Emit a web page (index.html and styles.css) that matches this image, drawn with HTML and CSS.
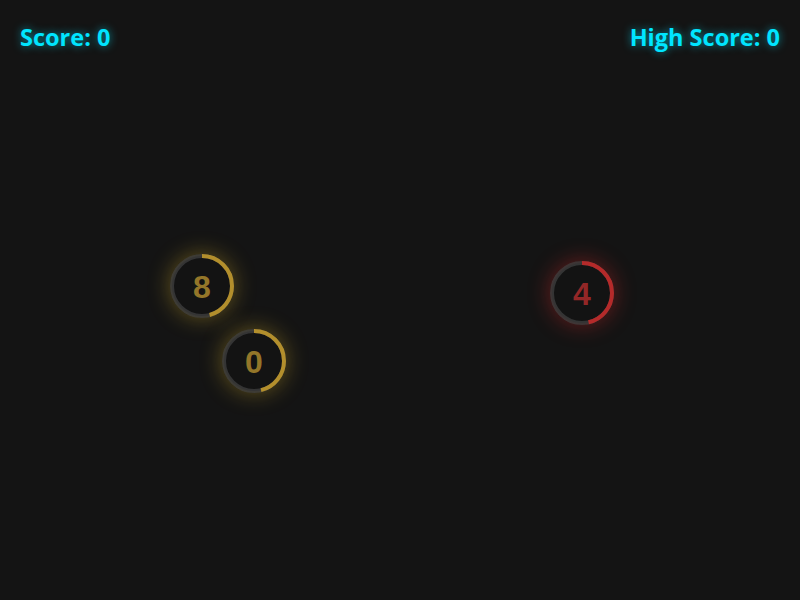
FILE: index.html
```html
<!DOCTYPE html>
<html>
<head>
<meta charset="utf-8">
<link rel="stylesheet" href="styles.css">
</head>
<body>
<div class="game">
  <div class="hud">
    <div class="score">Score: 0</div>
    <div class="score">High Score: 0</div>
  </div>
  <div class="target gold" style="left:170px;top:254px">
    <svg viewBox="0 0 64 64" width="64" height="64">
      <circle class="track" cx="32" cy="32" r="30"/>
      <circle class="arc" cx="32" cy="32" r="30" stroke-dasharray="86.4 188.5" transform="rotate(-90 32 32)"/>
    </svg>
    <span class="num">8</span>
  </div>
  <div class="target gold" style="left:222px;top:329px">
    <svg viewBox="0 0 64 64" width="64" height="64">
      <circle class="track" cx="32" cy="32" r="30"/>
      <circle class="arc" cx="32" cy="32" r="30" stroke-dasharray="87 188.5" transform="rotate(-90 32 32)"/>
    </svg>
    <span class="num">0</span>
  </div>
  <div class="target red" style="left:550px;top:261px">
    <svg viewBox="0 0 64 64" width="64" height="64">
      <circle class="track" cx="32" cy="32" r="30"/>
      <circle class="arc" cx="32" cy="32" r="30" stroke-dasharray="87.5 188.5" transform="rotate(-90 32 32)"/>
    </svg>
    <span class="num">4</span>
  </div>
</div>
</body>
</html>
```
FILE: styles.css
```css
html, body {
  margin: 0;
  padding: 0;
  background: #141414;
  width: 800px;
  height: 600px;
  overflow: hidden;
}
.game {
  position: relative;
  width: 800px;
  height: 600px;
}
.hud {
  display: flex;
  justify-content: space-between;
  padding: 21px 20px 0 20px;
}
.score {
  font-family: "Open Sans", "Noto Sans", sans-serif;
  font-weight: 700;
  font-size: 23.5px;
  line-height: 32px;
  color: #00e5ff;
  text-shadow: 0 0 8px rgba(0, 229, 255, 0.6);
}
.target {
  position: absolute;
  width: 64px;
  height: 64px;
  border-radius: 50%;
  display: flex;
  align-items: center;
  justify-content: center;
  background: #141414;
}
.target svg {
  position: absolute;
  left: 0;
  top: 0;
}
.track {
  fill: #131313;
  stroke: rgba(85, 85, 85, 0.5);
  stroke-width: 4;
}
.arc {
  fill: none;
  stroke-width: 4;
}
.gold {
  box-shadow: 0 0 22px rgba(200, 165, 40, 0.45), inset 0 0 10px rgba(200, 165, 40, 0.22);
}
.gold .arc { stroke: #b38f2c; }
.gold .num { color: #947629; }
.red {
  box-shadow: 0 0 22px rgba(210, 40, 40, 0.45), inset 0 0 10px rgba(210, 40, 40, 0.22);
}
.red .arc { stroke: #b52a2a; }
.red .num { color: #932727; }
.num {
  position: relative;
  top: 1px;
  font-family: "Liberation Sans", Arial, sans-serif;
  font-weight: 700;
  font-size: 32px;
  line-height: 1;
}
```
